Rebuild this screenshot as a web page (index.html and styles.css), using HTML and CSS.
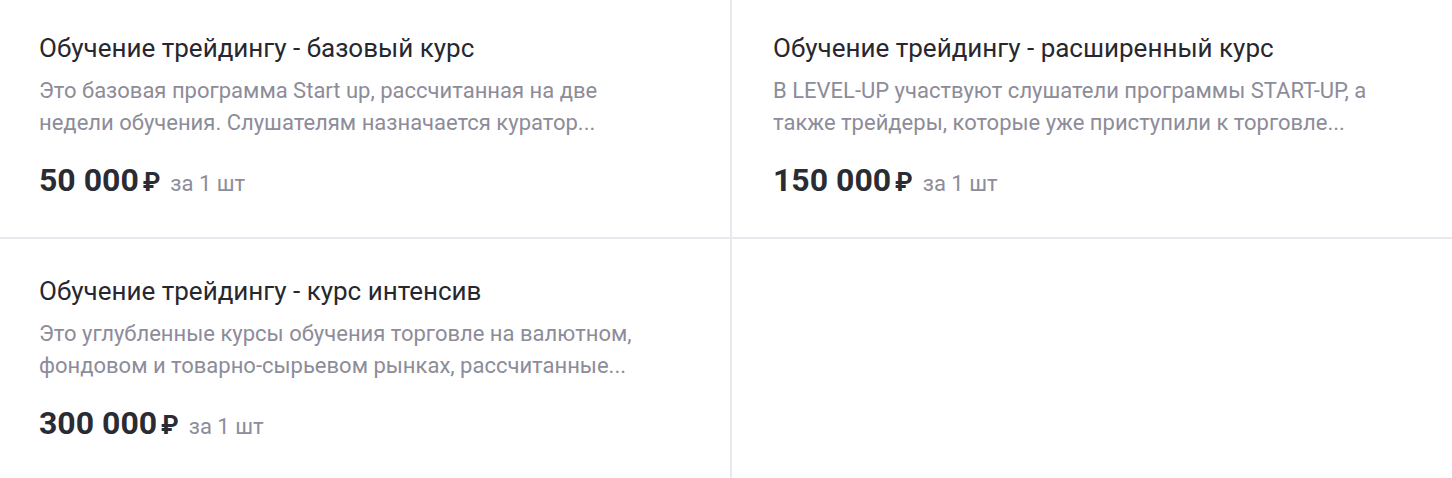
FILE: index.html
```html
<!DOCTYPE html>
<html lang="ru">
<head>
<meta charset="utf-8">
<link rel="stylesheet" href="styles.css">
</head>
<body>
<div class="grid">
  <div class="cell cell-left cell-top">
    <div class="title">Обучение трейдингу - базовый курс</div>
    <div class="desc">Это базовая программа Start up, рассчитанная на две недели обучения. Слушателям назначается куратор...</div>
    <div class="price"><span class="amount">50 000</span> <span class="rub">₽</span><span class="unit">за 1 шт</span></div>
  </div>
  <div class="cell cell-right cell-top">
    <div class="title">Обучение трейдингу - расширенный курс</div>
    <div class="desc">В LEVEL-UP участвуют слушатели программы START-UP, а также трейдеры, которые уже приступили к торговле...</div>
    <div class="price"><span class="amount">150 000</span> <span class="rub">₽</span><span class="unit">за 1 шт</span></div>
  </div>
  <div class="cell cell-left cell-bottom">
    <div class="title">Обучение трейдингу - курс интенсив</div>
    <div class="desc">Это углубленные курсы обучения торговле на валютном, фондовом и товарно-сырьевом рынках, рассчитанные...</div>
    <div class="price"><span class="amount">300 000</span> <span class="rub">₽</span><span class="unit">за 1 шт</span></div>
  </div>
  <div class="cell cell-right cell-bottom"></div>
</div>
</body>
</html>
```

FILE: styles.css
```css
html, body {
  margin: 0;
  padding: 0;
  background: #ffffff;
}
body {
  font-family: Roboto, "Liberation Sans", sans-serif;
  color: #2b2b33;
}
.grid {
  display: grid;
  grid-template-columns: 732px 1fr;
  grid-template-rows: 239px 1fr;
  height: 478px;
}
.cell {
  box-sizing: border-box;
  padding-right: 40px;
}
.cell-left {
  padding-left: 39px;
  border-right: 2px solid #e9e8ef;
}
.cell-right {
  padding-left: 41px;
}
.cell-top {
  padding-top: 32px;
  border-bottom: 2px solid #e9e8ef;
}
.cell-bottom {
  padding-top: 36px;
}
.title {
  font-size: 26px;
  line-height: 32px;
  color: #27272f;
}
.desc {
  margin-top: 11px;
  font-size: 22px;
  line-height: 32px;
  color: #8d8c99;
  max-width: 620px;
}
.price {
  margin-top: 21px;
  line-height: 40px;
  white-space: nowrap;
}
.amount {
  font-size: 32px;
  font-weight: 700;
  color: #2b2b33;
}
.rub {
  font-size: 25px;
  font-weight: 700;
  color: #2b2b33;
}
.unit {
  margin-left: 10px;
  font-size: 22px;
  color: #8d8c99;
}
```
